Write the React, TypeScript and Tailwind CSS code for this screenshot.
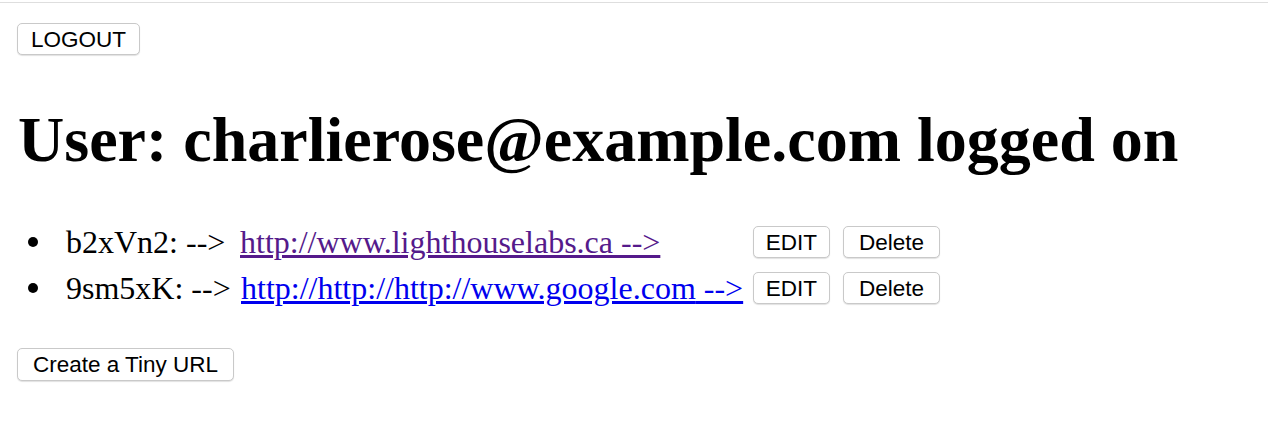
import React from "react";

const btn =
  "h-[32px] pt-[2px] rounded-[5px] border border-[#c9c9c9] bg-white shadow-[0_1px_1px_rgba(0,0,0,0.12)] text-[22.5px] leading-none text-black [font-family:'Liberation_Sans',Arial,sans-serif]";

function Row({
  code,
  url,
  visited,
  labelW,
}: {
  code: string;
  url: string;
  visited?: boolean;
  labelW: string;
}) {
  return (
    <div className="flex h-[46px] items-center">
      <div className="w-[48px] flex justify-start pl-[10px]">
        <span className="block w-[10px] h-[10px] rounded-full bg-black" />
      </div>
      <div className="w-[687px] text-[32px] leading-none whitespace-nowrap flex">
        <span className={labelW}>{code}: --&gt;</span>
        <a
          href="#"
          className={visited ? "text-[#551a8b] underline" : "text-[#0000ee] underline"}
        >
          {url} --&gt;
        </a>
      </div>
      <div className="flex gap-[13px]">
        <button className={`${btn} w-[77px]`}>EDIT</button>
        <button className={`${btn} w-[97px]`}>Delete</button>
      </div>
    </div>
  );
}

export default function App() {
  return (
    <div className="w-[1268px] h-[426px] bg-white overflow-hidden [font-family:'Liberation_Serif','Times_New_Roman',serif] text-black">
      <div className="h-[3px] border-t border-[#dedede] mt-[2px]" />
      <div className="pl-[17px] pt-[18px]">
        <button className={`${btn} w-[123px]`}>LOGOUT</button>
      </div>
      <h1 className="pl-[18px] mt-[53px] text-[64px] font-bold leading-none whitespace-nowrap">
        User: charlierose@example.com logged on
      </h1>
      <div className="pl-[18px] mt-[47px]">
        <Row code="b2xVn2" url="http://www.lighthouselabs.ca" visited labelW="w-[174px]" />
        <Row code="9sm5xK" url="http://http://http://www.google.com" labelW="w-[175px]" />
      </div>
      <div className="pl-[17px] mt-[37px]">
        <button className={`${btn} w-[217px] h-[33px]`}>Create a Tiny URL</button>
      </div>
    </div>
  );
}
